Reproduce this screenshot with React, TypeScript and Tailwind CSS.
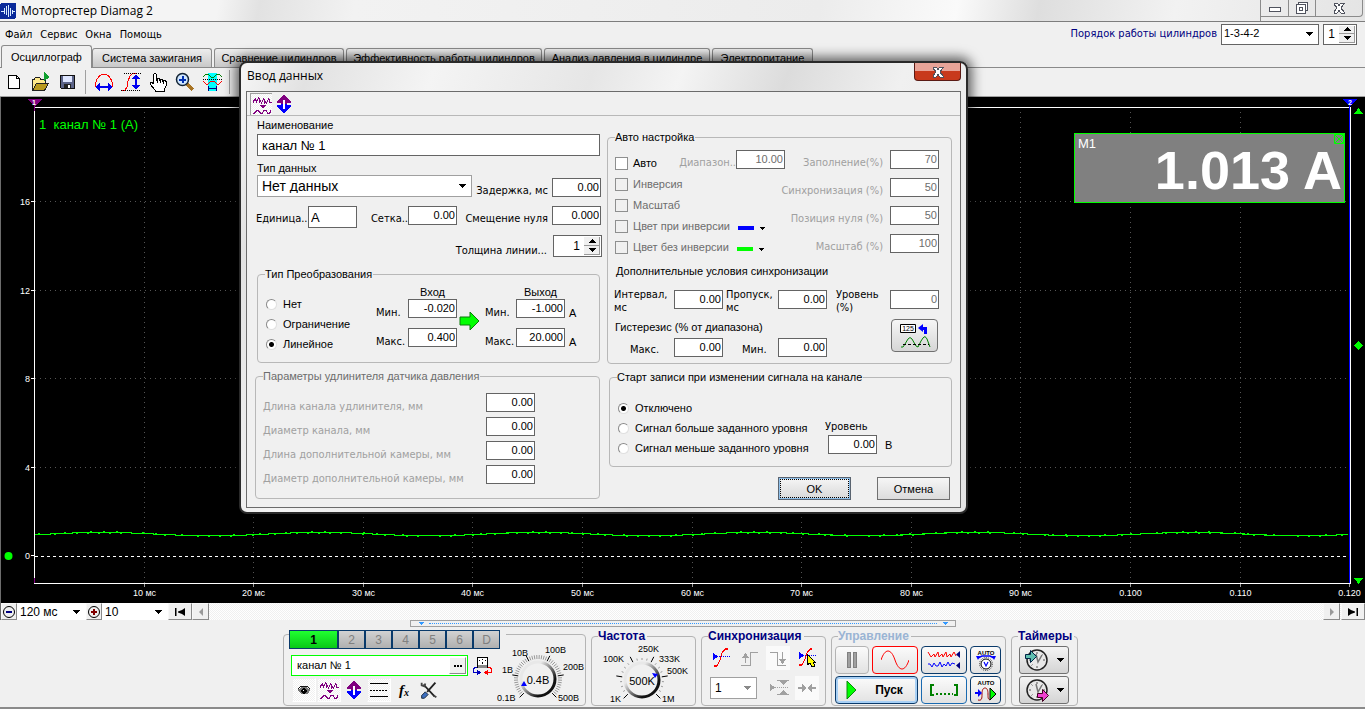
import React, { useState } from 'react';
import clsx from 'clsx';

const sans = "font-['Liberation_Sans',sans-serif]";
const tahoma = "font-['DejaVu_Sans_Condensed','DejaVu_Sans',sans-serif]";
const segoe = "font-['Open_Sans','Noto_Sans',sans-serif]";

const hatch = 'bg-[repeating-conic-gradient(#ffffff_0_25%,#f0f0f0_0_50%)] bg-[length:2px_2px]';

/* ---------- small controls ---------- */

type NumProps = { label: string; value: string; disabled?: boolean; className?: string };

function Num({ label, value, disabled, className }: NumProps) {
  return (
    <input
      aria-label={label}
      defaultValue={value}
      disabled={disabled}
      className={clsx(
        'h-[19px] w-[49px] shrink-0 border border-[#646464] bg-white pr-px pb-px text-right text-[11px] leading-4 disabled:text-[#6d6d6d]',
        className,
      )}
    />
  );
}

function Arrow({ className }: { className?: string }) {
  return (
    <svg viewBox="0 0 8 4" shapeRendering="crispEdges" className={clsx('h-1 w-2 fill-current', className)}>
      <path d="M0 0h8L4 4z" />
    </svg>
  );
}

type DropProps = { label: string; options: string[]; className?: string; box?: string; disabled?: boolean };

function Drop({ label, options, className, box, disabled }: DropProps) {
  return (
    <div className={clsx('relative shrink-0', box)}>
      <select
        aria-label={label}
        disabled={disabled}
        className={clsx('block h-full w-full appearance-none bg-white', className)}
      >
        {options.map((o) => (
          <option key={o}>{o}</option>
        ))}
      </select>
      <Arrow
        className={clsx('pointer-events-none absolute top-1/2 right-1.5 -mt-0.5', disabled && 'text-[#8a8a8a]')}
      />
    </div>
  );
}

function Spinner({ label, className }: { label: string; className?: string }) {
  const [value, setValue] = useState(1);
  const btn = 'flex flex-1 items-center justify-center border-r border-b border-[#9a9a9a] bg-[#f0f0f0]';
  return (
    <div className={clsx('flex shrink-0 border border-[#646464] bg-white p-px', className)}>
      <input
        aria-label={label}
        value={value}
        onChange={(e) => setValue(Number(e.target.value) || 1)}
        className="w-0 flex-1 pr-1 text-right text-[12px]"
      />
      <div className="flex w-4 flex-col">
        <button type="button" aria-label="Больше" onClick={() => setValue(value + 1)} className={btn}>
          <Arrow className="rotate-180" />
        </button>
        <button type="button" aria-label="Меньше" onClick={() => setValue(Math.max(1, value - 1))} className={btn}>
          <Arrow />
        </button>
      </div>
    </div>
  );
}

function Radio({ name, label, checked }: { name: string; label: string; checked?: boolean }) {
  return (
    <label className="flex h-5 items-center gap-[6px] whitespace-nowrap">
      <input
        type="radio"
        name={name}
        defaultChecked={checked}
        className="size-[11px] appearance-none rounded-full border border-[#8a8a8a] border-r-[#e0e0e0] border-b-[#e0e0e0] bg-white checked:bg-[radial-gradient(circle,#000_2px,#fff_3px)]"
      />
      {label}
    </label>
  );
}

function Check({ label, disabled }: { label: string; disabled?: boolean }) {
  return (
    <label className={clsx('flex h-3.5 items-center gap-[5px] whitespace-nowrap', disabled && 'text-[#6d6d6d]')}>
      <input
        type="checkbox"
        disabled={disabled}
        className="size-[13px] appearance-none border border-[#8e8f8f] bg-white checked:bg-[#333] disabled:bg-[#f0f0f0]"
      />
      {label}
    </label>
  );
}

/* ---------- icons ---------- */

type IconProps = { children: React.ReactNode; box?: string; className?: string };

function Icon({ children, box = '0 0 24 24', className = 'size-6' }: IconProps) {
  return (
    <svg viewBox={box} fill="none" shapeRendering="crispEdges" className={clsx('shrink-0', className)}>
      {children}
    </svg>
  );
}

const WavesIcon = () => (
  <Icon>
    <path
      d="M3.500 10V8l2-2 1 3 2-4 1 1v3l1-1 1 2 2-4 1 1v3l1-1 1 1 2-4 1 1v2l2 1"
      stroke="#800080"
      strokeWidth="1.300"
    />
    <path
      d="M3 20.500h1.500l2-3h2l2 3H12l2-3h2l2 3h1.500l1.500-3"
      stroke="#800080"
      strokeWidth="1.300"
    />
    <path d="M9 12h7l-3.500 3.500z" fill="#800080" />
  </Icon>
);

const UpDownIcon = () => (
  <Icon>
    <path d="M12 3l7 6v2h-4v2h-2V8h-2v5H9v-2H5V9z" fill="#800080" />
    <path d="M12 21l7-6v-2h-4v-1h-2v5h-2v-5H9v1H5v2z" fill="#0000ff" />
    <path d="M11 8h2v9h-2z" fill="#fff" />
  </Icon>
);

const AppIcon = () => (
  <Icon box="0 0 16 16" className="size-4">
    <rect width="16" height="16" rx="2" fill="#0a2a9a" />
    <path d="M1 8.500h3M4.500 5v6M6.500 3v9M8.500 2v12M10.500 5v8M12.500 7v4M13 8.500h2" stroke="#d8ecff" />
  </Icon>
);

function MainToolbar() {
  const btn = 'flex w-[27px] items-center justify-center';
  return (
    <div className="flex h-[29px] items-center border-b border-[#a0a0a0] bg-[#f0f0f0]">
      <button type="button" aria-label="Новый" className={btn}>
        <Icon>
          <path d="M6.500 5.500h8l3 3v10h-11z" fill="#fff" stroke="#000" />
          <path d="M14.500 5.500v3h3" stroke="#000" />
        </Icon>
      </button>
      <button type="button" aria-label="Открыть" className={btn}>
        <Icon>
          <path d="M3.500 20v-11h2l1-2h4l1 2h5v5" fill="#ffe98a" stroke="#222" />
          <path d="M3.500 20.500l4-7h12l-4 7z" fill="#b99a1e" stroke="#222" />
          <path d="M15 2l6 5-6 4z" fill="#10a030" />
        </Icon>
      </button>
      <button type="button" aria-label="Сохранить" className={btn}>
        <Icon>
          <path d="M4.500 5.500h14v13h-13l-1-1z" fill="#5c6488" stroke="#111" />
          <path d="M7 6h9v6H7z" fill="#dfe6ff" />
          <path d="M8 14h7v4H8z" fill="#222" />
          <path d="M12 15h2v3h-2z" fill="#fff" />
        </Icon>
      </button>
      <span className="mx-1 h-6 border-l border-[#a0a0a0]" />
      <button type="button" aria-label="По горизонтали" className={btn}>
        <Icon>
          <path d="M3.500 17v-3l1-4 3-4 3-2h3l3 2 3 4 1 4v3" stroke="#f00" />
          <path d="M3 17l5-4v3h8v-3l5 4-5 4v-3H8v3z" fill="#0000f0" />
        </Icon>
      </button>
      <button type="button" aria-label="По вертикали" className={btn}>
        <Icon>
          <path d="M3 20h3l2-3 1-6 2-5 3-3h4" stroke="#f00" />
          <path d="M5 3.500h17M2 20.500h20" stroke="#000" strokeDasharray="1 1" />
          <path d="M17 4l4 5h-3v6h3l-4 5-4-5h3V9h-3z" fill="#0000f0" />
        </Icon>
      </button>
      <button type="button" aria-label="Рука" className={btn}>
        <Icon>
          <path
            d="M7.500 13V4.500l1-1h1l1 1V10h1V8.500h2V10h1V9.500h2V11h1v-.5h1.500l1 1V16l-2 4v1.500h-9V20l-5-6v-1.500h2l1.500 1.500"
            fill="#fff"
            stroke="#000"
          />
          <path d="M11.500 10v3M14.500 10v3M17.500 11v3" stroke="#000" />
        </Icon>
      </button>
      <button type="button" aria-label="Лупа" className={btn}>
        <Icon>
          <path d="M14 14l6 6" stroke="#a87424" strokeWidth="3" />
          <circle cx="9.500" cy="9.500" r="6" fill="#cfe6ff" stroke="#123" strokeWidth="1.500" shapeRendering="auto" />
          <path d="M6 9.500h7M9.500 6v7" stroke="#0030b0" strokeWidth="2" />
        </Icon>
      </button>
      <button type="button" aria-label="Окно измерений" className={btn}>
        <Icon>
          <path d="M8 3h9v18H8z" fill="#00ffff" />
          <path d="M3 7l3-3h2l3 3h3l3-3h2l3 3" stroke="#008000" />
          <path d="M3 11l3 3h2l3-3h3l3 3h2l3-3" stroke="#f00" />
          <path d="M3 9.500h20" stroke="#000" strokeDasharray="1 1" />
          <path d="M8 18.500h9M8.500 16v5M16.500 16v5" stroke="#000080" />
        </Icon>
      </button>
      <span className="mx-1 h-6 border-l border-[#a0a0a0]" />
      <button type="button" aria-label="Сигналы" className={btn}>
        <Icon>
          <path d="M3 9h8" stroke="#008000" />
          <path d="M3 14h8" stroke="#f00" />
        </Icon>
      </button>
    </div>
  );
}

/* ---------- window header ---------- */

const TABS = [
  { title: 'Осциллограф', width: 'w-[91px]' },
  { title: 'Система зажигания', width: 'w-[120px]' },
  { title: 'Сравнение цилиндров', width: 'w-[130px]' },
  { title: 'Эффективность работы цилиндров', width: 'w-[196px]' },
  { title: 'Анализ давления в цилиндре', width: 'w-[166px]' },
  { title: 'Электропитание', width: 'w-[101px]' },
];

function Header() {
  const winBtn = 'flex h-[17px] items-center justify-center border-r border-b border-[#8b8b8b]';
  return (
    <header>
      <div className="flex h-[22px] border-b border-[#7d7d7d] bg-linear-[100deg,#f4f4f4_0%,#f4f4f4_16%,#e2e2e2_19%,#f2f2f2_26%,#ececec_60%,#fafafa_70%,#dedede_76%,#f2f2f2_86%,#e4e4e4_100%]">
        <div className="flex flex-1 items-center gap-[5px]">
          <AppIcon />
          <h1 className={clsx('text-[12px] leading-4', segoe)}>Мотортестер Diamag 2</h1>
        </div>
        <div className="mr-0.5 flex border-l border-[#8b8b8b]">
          <button type="button" aria-label="Свернуть" className={clsx(winBtn, 'w-7')}>
            <Icon box="0 0 12 12" className="size-3">
              <rect x=".5" y="5.500" width="11" height="4" fill="#fff" stroke="#50535e" />
            </Icon>
          </button>
          <button type="button" aria-label="Развернуть" className={clsx(winBtn, 'w-[27px]')}>
            <Icon box="0 0 12 12" className="size-3">
              <rect x="2.500" y=".5" width="9" height="8" fill="#fff" stroke="#50535e" />
              <rect x=".5" y="2.500" width="9" height="9" fill="#fff" stroke="#50535e" />
              <rect x="3.500" y="5.500" width="3" height="3" stroke="#50535e" />
            </Icon>
          </button>
          <button type="button" aria-label="Закрыть" className={clsx(winBtn, 'w-[47px] rounded-br')}>
            <Icon box="0 0 12 12" className="size-3">
              <path d="M1 1h3l2 2.500L8 1h3v1L8 6l3 4v1H8L6 8.500 4 11H1v-1l3-4-3-4z" fill="#fff" stroke="#50535e" />
            </Icon>
          </button>
        </div>
      </div>
      <div className="flex h-6 items-center bg-[#f0f0f0] pr-2">
        <nav className={clsx('flex flex-1 gap-2 pt-[3px] pl-[5px] text-[11px]', tahoma)}>
          {['Файл', 'Сервис', 'Окна', 'Помощь'].map((m) => (
            <button type="button" key={m}>
              {m}
            </button>
          ))}
        </nav>
        <span className={clsx('pr-1 text-[11px] text-[#000080]', tahoma)}>Порядок работы цилиндров</span>
        <Drop
          label="Порядок работы цилиндров"
          options={['1-3-4-2', '1-2-4-3']}
          box="h-[21px] w-[98px]"
          className="border border-[#646464] pb-0.5 pl-0.5 text-[11px]"
        />
        <Spinner label="Номер цилиндра" className="ml-1 h-[21px] w-[34px]" />
      </div>
      <div role="tablist" className="flex h-[22px] items-end gap-0.5 border-b border-[#8a8a8a] bg-[#f0f0f0] pl-px">
        {TABS.map((t, i) => (
          <button
            type="button"
            role="tab"
            aria-selected={i === 0}
            key={t.title}
            className={clsx(
              'rounded-t-[3px] border border-b-0 border-[#8a8a8a] text-[11px] leading-[18px] whitespace-nowrap',
              t.width,
              i === 0 ? '-mr-0.5 -mb-px h-[23px] bg-[#f0f0f0] pb-px' : 'h-[19px] bg-linear-to-b from-[#ededed] to-[#c8c8c8]',
            )}
          >
            {t.title}
          </button>
        ))}
      </div>
      <MainToolbar />
    </header>
  );
}

/* ---------- oscilloscope screen ---------- */

const X_LABELS = ['10 мс', '20 мс', '30 мс', '40 мс', '50 мс', '60 мс', '70 мс', '80 мс', '90 мс', '0.100', '0.110', '0.120'];
const X0 = 35;
const STEP = 109.6;

function tracePath() {
  let d = '';
  for (let x = X0; x < 1349; x += 1) {
    const base = 436.6 - 1.7 * Math.sin(((x - 48) / 218) * 2 * Math.PI);
    const noise = (x * 7919) % 13 === 0 ? -1 : (x * 104729) % 11 === 0 ? 1 : 0;
    d += `${x === X0 ? 'M' : 'L'}${x} ${Math.round(base + noise * 0.6) + 0.5}`;
  }
  return d;
}

function Scope() {
  return (
    <section className="relative min-h-0 flex-1 border-l border-[#6d6d6d] bg-black">
      <svg
        viewBox="1 0 1364 506"
        preserveAspectRatio="none"
        fill="none"
        shapeRendering="crispEdges"
        className={clsx('block h-full w-full', sans)}
      >
        {X_LABELS.map((label, i) => {
          const x = Math.round(X0 + STEP * (i + 1)) - 0.5;
          return (
            <g key={label}>
              {i < 11 && <path d={`M${x} 15V486`} stroke="#555" strokeDasharray="1 4" />}
              <path d={`M${x} 486v4`} stroke="#999" />
              <text x={x} y="499" fill="#fff" fontSize="9" textAnchor="middle">
                {label}
              </text>
            </g>
          );
        })}
        {[16, 12, 8, 4, 0].map((v, i) => {
          const y = Math.round(104 + i * 88.5) + 0.5;
          return (
            <g key={v}>
              {v > 0 && <path d={`M35 ${y}H1349`} stroke="#555" strokeDasharray="1 4" />}
              <path d={`M31 ${y}h4`} stroke="#fff" />
              <text x="30" y={y + 3} fill="#fff" fontSize="9" textAnchor="end">
                {v}
              </text>
            </g>
          );
        })}
        <path d="M35 459.500H1350" stroke="#fff" strokeDasharray="3 3" />
        <path d="M34.500 10.500V486.500H1350.500V10.500z" stroke="#fff" />
        <path d="M1349.500 8V486" stroke="#0000ff" />
        <path d="M34.500 7V14M34.500 481v5" stroke="#800080" />
        <path d={tracePath()} stroke="#00ff00" />
        <path d="M27 2h15l-7 7z" fill="#800080" />
        <path d="M1342 2h15l-7 7z" fill="#0000ff" />
        <text x="34" y="8" fill="#fff" fontSize="7" fontWeight="bold" textAnchor="middle">
          1
        </text>
        <text x="1350" y="8" fill="#fff" fontSize="7" fontWeight="bold" textAnchor="middle">
          2
        </text>
        <circle cx="8.500" cy="459" r="4" fill="#00ff00" shapeRendering="auto" />
        <path d="M1354 17l4.500-6 4.500 6zM1354 481l4.500 6 4.500-6zM1354 248.500l4.500-4.500 4.500 4.500-4.500 4.500z" fill="#00ff00" />
        <text x="39" y="32" fill="#00ff00" fontSize="13" xmlSpace="preserve">
          {'1  канал № 1 (A)'}
        </text>
      </svg>
      <div className="absolute top-9 right-5 flex h-[70px] w-[271px] justify-between border border-[#00ff00] bg-[#808080] text-white">
        <span className="pl-[3px] text-[13px] leading-5">M1</span>
        <span className="pr-0.5 text-[54px] leading-[72px] font-bold">1.013 A</span>
        <svg viewBox="0 0 10 10" fill="none" stroke="#00ff00" className="absolute top-0 right-0 size-2.5">
          <path d="M.5.5h9v9h-9zM1 1l8 8M9 1L1 9" />
        </svg>
      </div>
    </section>
  );
}

function ScrollStrip() {
  const btn =
    'flex h-[17px] shrink-0 items-center justify-center border border-[#f8f8f8] border-r-[#8a8a8a] border-b-[#8a8a8a] bg-[#f0f0f0]';
  return (
    <div className={clsx('flex h-[17px] border-l border-[#6d6d6d]', hatch)}>
      <button type="button" aria-label="Сжать" className={clsx(btn, 'w-4')}>
        <svg viewBox="0 0 14 14" fill="none" className="size-3.5 shrink-0">
          <circle cx="7" cy="7" r="5.500" stroke="#000" />
          <path d="M4 7h6" stroke="#000080" strokeWidth="2" />
        </svg>
      </button>
      <Drop label="Развёртка" options={['120  мс']} box="h-[17px] w-[69px]" className="pl-[3px] text-[12px]" />
      <button type="button" aria-label="Растянуть" className={clsx(btn, 'w-4')}>
        <svg viewBox="0 0 14 14" fill="none" className="size-3.5 shrink-0">
          <circle cx="7" cy="7" r="5.500" stroke="#000" />
          <path d="M4 7h6M7 4v6" stroke="#800000" strokeWidth="2" />
        </svg>
      </button>
      <Drop label="Шаг" options={['10']} box="h-[17px] w-[66px]" className="pl-[3px] text-[12px]" />
      <button type="button" aria-label="В начало" className={clsx(btn, 'w-6')}>
        <svg viewBox="0 0 10 8" className="h-2 w-2.5">
          <path d="M0 0h1.500v8H0zM10 0v8L7 6 3 4.500v-1L7 2z" />
        </svg>
      </button>
      <button type="button" aria-label="Назад" className={clsx(btn, 'w-[17px]')}>
        <svg viewBox="0 0 4 8" className="h-2 w-1 fill-[#999]">
          <path d="M4 0v8L0 4z" />
        </svg>
      </button>
      <div className="flex-1" />
      <button type="button" aria-label="Вперёд" className={clsx(btn, 'w-[17px]')}>
        <svg viewBox="0 0 4 8" className="h-2 w-1 fill-[#999]">
          <path d="M0 0v8l4-4z" />
        </svg>
      </button>
      <button type="button" aria-label="В конец" className={clsx(btn, 'ml-px w-6')}>
        <svg viewBox="0 0 10 8" className="h-2 w-2.5">
          <path d="M8.500 0H10v8H8.500zM0 0v8l3-2 4-1.500v-1L3 2z" />
        </svg>
      </button>
    </div>
  );
}

/* ---------- bottom control deck ---------- */

type DialProps = {
  box: string;
  className: string;
  cx: number;
  value: string;
  labels: [string, number, number][];
  pointer: string;
  count: number;
};

function Dial({ box, className, cx, value, labels, pointer, count }: DialProps) {
  const cy = 680;
  const dense = count > 24;
  return (
    <svg viewBox={box} className={clsx('shrink-0', className, sans)}>
      <defs>
        <linearGradient id={`rim${cx}`} x1="0" y1="0" x2="1" y2="1">
          <stop offset="0.3" stopColor="#e8e8e8" />
          <stop offset="0.75" stopColor="#111" />
        </linearGradient>
      </defs>
      {Array.from({ length: count }, (_, i) => {
        const a = ((135 + (270 * i) / (count - 1)) * Math.PI) / 180;
        const major = i % ((count - 1) / 5) < 0.5;
        const r2 = major ? 26 : dense ? 24 : 22;
        return (
          <line
            key={i}
            x1={cx + 20 * Math.cos(a)}
            y1={cy + 20 * Math.sin(a)}
            x2={cx + r2 * Math.cos(a)}
            y2={cy + r2 * Math.sin(a)}
            stroke={major ? '#000' : '#999'}
          />
        );
      })}
      <circle cx={cx} cy={cy} r="17" fill="#f0f0f0" stroke={`url(#rim${cx})`} strokeWidth="3" />
      <path d={pointer} fill="#0000ff" />
      <text x={cx} y={cy + 5} fontSize="11" textAnchor="middle">
        {value}
      </text>
      {labels.map(([t, x, y]) => (
        <text key={t} x={x} y={y} fontSize="9">
          {t}
        </text>
      ))}
    </svg>
  );
}

type PanelProps = { title: string; muted?: boolean; className?: string; children: React.ReactNode };

function Panel({ title, muted, className, children }: PanelProps) {
  return (
    <fieldset className={clsx('h-[77px] shrink-0 rounded border border-[#b4b4b4]', className)}>
      <legend
        className={clsx('ml-1.5 pr-0.5 text-[12px] leading-[14px] font-bold', muted ? 'text-[#9ab4d4]' : 'text-[#000080]')}
      >
        {title}
      </legend>
      {children}
    </fieldset>
  );
}

function ChannelPanel() {
  const tool = 'flex size-6 items-center justify-center border border-[#f0f0f0]';
  const pressed = clsx('border-[#a0a0a0] border-r-white border-b-white', hatch);
  return (
    <div className="mt-[5px] flex h-[72px] w-[303px] shrink-0 rounded border border-[#b4b4b4]">
      <div className="-mt-[5px] w-[213px] shrink-0 pl-[5px]">
        <div className="flex w-[217px] bg-[#f0f0f0]">
          <button
            type="button"
            className="h-[19px] w-[49px] border border-[#0a3a6a] bg-linear-to-b from-[#20ff30] to-[#08c818] text-[12px] font-bold"
          >
            1
          </button>
          {['2', '3', '4', '5', '6', 'D'].map((c) => (
            <button
              type="button"
              key={c}
              className="h-[19px] w-[27px] border border-[#0a3a6a] bg-linear-to-b from-[#d2d2d2] to-[#b0b0b0] text-[12px] text-[#808080]"
            >
              {c}
            </button>
          ))}
        </div>
        <div className="mt-[6px] flex items-center gap-1 pl-0.5">
          <div className="flex h-[21px] w-[177px] border border-[#00ff00] bg-white p-px">
            <input aria-label="Имя канала" defaultValue="канал № 1" className="w-0 flex-1 pl-1 text-[11px]" />
            <button
              type="button"
              aria-label="Выбрать канал"
              className="flex w-[17px] items-center justify-center gap-px border border-white border-r-[#8a8a8a] border-b-[#8a8a8a] bg-[#f0f0f0]"
            >
              <i className="size-0.5 bg-black" />
              <i className="size-0.5 bg-black" />
              <i className="size-0.5 bg-black" />
            </button>
          </div>
          <button type="button" aria-label="Прибор">
            <Icon box="0 0 20 20" className="size-5">
              <path d="M5.500 1.500h10v10h-10z" fill="#fff" stroke="#000" />
              <path d="M6 9h9v3H6z" fill="#888" />
              <path d="M7 4.500h1M10 3.500h1M13 4.500h1M10 8l1-2" stroke="#000" />
              <path d="M5 11.500H3L1.500 13v3l1 .5H6" stroke="#0000c0" />
              <path d="M5 13.500l4 3-4 3z" fill="#0000c0" />
              <path d="M16 11.500h2l1.500 1.500v3l-1 .5H15" stroke="#f00" />
              <path d="M16 13.500l-4 3 4 3z" fill="#f00" />
            </Icon>
          </button>
        </div>
        <div className="mt-0.5 flex gap-px pl-[3px]">
          <button type="button" aria-label="Видимость" className={clsx(tool, pressed)}>
            <Icon className="size-[22px]">
              <path d="M5 12l4-3h6l4 3-3 4H9z" fill="#777" />
              <path d="M5 11l4-3h6l4 3" stroke="#000" />
              <circle cx="12" cy="13" r="3" fill="#000" />
              <path d="M11 12h1v1h-1z" fill="#fff" />
            </Icon>
          </button>
          <button type="button" aria-label="Фильтр" className={clsx(tool, pressed)}>
            <WavesIcon />
          </button>
          <button type="button" aria-label="Смещение" className={tool}>
            <UpDownIcon />
          </button>
          <button type="button" aria-label="Линии" className={clsx(tool, pressed)}>
            <svg viewBox="0 0 18 14" fill="none" stroke="#000" className="h-3.5 w-[18px] shrink-0">
              <path d="M0 .5h18M0 13.500h18" />
              <path d="M0 7.500h18" strokeDasharray="2 1" />
            </svg>
          </button>
          <button type="button" aria-label="Функция" className={clsx(tool, "font-['Liberation_Serif',serif]")}>
            <span className="text-[15px] leading-5 font-bold italic">f</span>
            <span className="pt-1 text-[10px] font-bold italic">x</span>
          </button>
          <button type="button" aria-label="Настройки" className={tool}>
            <svg viewBox="0 0 24 24" fill="none" className="size-[22px] shrink-0">
              <path d="M6 6l12 13M19 4l-9 10" stroke="#222" strokeWidth="2" />
              <path d="M4 4v3l3 1 1-3M17 18l3 2" stroke="#444" strokeWidth="2" />
              <path d="M4 18l4-4 3 3-4 4H4z" fill="#3c6ebf" stroke="#123" />
            </svg>
          </button>
        </div>
      </div>
      <Dial
        box="497 636 88 70"
        className="h-[70px] w-[88px]"
        cx={538}
        count={46}
        value="0.4B"
        pointer="M521 687l3-5 3 5z"
        labels={[
          ['0.1B', 497, 702],
          ['1B', 502, 674],
          ['10B', 512, 657],
          ['100B', 545, 654],
          ['200B', 563, 671],
          ['500B', 558, 702],
        ]}
      />
    </div>
  );
}

function SyncPanel() {
  const tool = 'flex size-6 items-center justify-center';
  return (
    <Panel title="Синхронизация" className="w-[125px]">
      <div className="mt-[3px] flex justify-between pr-1.5 pl-[7px]">
        <button type="button" aria-label="Синхронизация по уровню" className={tool}>
          <Icon>
            <path d="M5 20h3l3-6 2-7 3-4h3" stroke="#f00" strokeWidth="1.200" />
            <path d="M4 10.500h17" stroke="#00f" strokeDasharray="1 1" />
            <path d="M4 7l5 3.500L4 14z" fill="#00f" />
          </Icon>
        </button>
        <button type="button" aria-label="По фронту" disabled className={tool}>
          <Icon>
            <path d="M3 19.500h9.500v-13H20M7.500 17V9" stroke="#a0a0a0" strokeWidth="1.300" />
            <path d="M4 12l3.500-5 3.500 5z" fill="#a0a0a0" />
          </Icon>
        </button>
        <button type="button" aria-label="По спаду" disabled className={clsx(tool, 'bg-[#fafafa]')}>
          <Icon>
            <path d="M4 6.500h7.500v13H20M16.500 6v9" stroke="#a0a0a0" strokeWidth="1.300" />
            <path d="M13 13l3.500 5 3.500-5z" fill="#a0a0a0" />
          </Icon>
        </button>
        <button type="button" aria-label="Указать уровень" className={tool}>
          <Icon>
            <path d="M4 19h3l3-6 2-6 3-4h2" stroke="#f00" strokeWidth="1.200" />
            <path d="M4 9.500h17" stroke="#00f" strokeDasharray="1 1" />
            <path d="M4 6l5 3.500L4 13z" fill="#00f" />
            <path d="M12 8l8 8h-2l2 4-3 1-2-4-3 2z" fill="#ff0" stroke="#000" />
          </Icon>
        </button>
      </div>
      <div className="mt-1.5 flex items-center pl-2">
        <Drop
          label="Канал синхронизации"
          options={['1']}
          disabled
          box="h-[22px] w-[47px]"
          className="border border-[#a0a0a0] bg-[#f0f0f0] pl-1 text-[12px]"
        />
        <button type="button" aria-label="Уровни" disabled className={clsx(tool, 'ml-2.5')}>
          <Icon>
            <path d="M10 4.500h12M10 18.500h12" stroke="#a0a0a0" />
            <path d="M6 11.500h15" stroke="#a0a0a0" strokeDasharray="1 1" />
            <path d="M3 8l5 3.500L3 15zM13 5h7l-3.500 4zM13 18h7l-3.500-4z" fill="#a0a0a0" />
          </Icon>
        </button>
        <button type="button" aria-label="К центру" disabled className={clsx(tool, 'ml-1 bg-[#fafafa]')}>
          <Icon>
            <path d="M3 11h4V8l5 4-5 4v-3H3zM21 11h-4V8l-5 4 5 4v-3h4z" fill="#a0a0a0" />
          </Icon>
        </button>
      </div>
    </Panel>
  );
}

function ControlPanel() {
  const btn = 'flex h-7 items-center justify-center rounded-sm border bg-linear-to-b from-[#fbfbfb] to-[#e2e2e2]';
  const navy = 'border-[#0a3a6a]';
  return (
    <Panel title="Управление" muted className="w-[175px]">
      <div className="grid grid-cols-[34px_46px_46px_31px] gap-x-[3px] gap-y-0.5 pt-[3px] pl-[3px]">
        <button type="button" aria-label="Пауза" disabled className={clsx(btn, 'border-[#b4b4b4]')}>
          <Icon box="0 0 12 16" className="h-4 w-3">
            <path d="M1.500.5h3v15h-3zM7.500.5h3v15h-3z" fill="#a0a0a0" stroke="#808080" />
          </Icon>
        </button>
        <button type="button" aria-label="Синус" className={clsx(btn, 'border-[#f00]')}>
          <svg viewBox="0 0 28 20" fill="none" stroke="#f00" className="h-5 w-7">
            <path d="M0 10C4-2 10-2 14 10s10 12 14 0" />
          </svg>
        </button>
        <button type="button" aria-label="Поток" className={clsx(btn, navy)}>
          <svg viewBox="0 0 34 20" fill="none" className="h-5 w-[34px]">
            <path d="M1 2l3 5 3-3 1 3 3-5 1 5 3-3 1 3 3-5 1 5 3-3 1 3 3-5 2 4" stroke="#f00" />
            <path d="M1 14h2l2 3 2-4 2 3 2 0 2-4 2 5 2-3 2 2 2-4 2 4 2-3 3 1" stroke="#00f" />
            <path d="M33 1v7l-4-3.500zM33 12v7l-4-3.500z" fill="#000080" />
          </svg>
        </button>
        <button type="button" aria-label="Авто уровень" className={clsx(btn, navy)}>
          <AutoIcon knob />
        </button>
        <button
          type="button"
          className={clsx(btn, navy, 'col-span-2 pr-1 text-[12px] font-bold shadow-[inset_0_0_0_2px_#a8d0f5]')}
        >
          <svg viewBox="0 0 11 20" className="mr-[18px] h-5 w-[11px]">
            <path d="M1 1l9 9-9 9z" fill="#0f0" stroke="#0a8a0a" />
          </svg>
          Пуск
        </button>
        <button type="button" aria-label="Участок" className={clsx(btn, 'border-[#1a6ab0]')}>
          <svg viewBox="0 0 28 12" fill="none" stroke="#008000" strokeWidth="2" className="h-3 w-7">
            <path d="M4 1H1v10h3M24 1h3v10h-3" />
            <path d="M6 10h17" strokeDasharray="2 2" />
          </svg>
        </button>
        <button type="button" aria-label="Авто запуск" className={clsx(btn, navy)}>
          <AutoIcon />
        </button>
      </div>
    </Panel>
  );
}

function AutoIcon({ knob }: { knob?: boolean }) {
  return (
    <svg viewBox="0 0 22 24" fill="none" className={clsx('h-6 w-[22px]', sans)}>
      <text x="11" y="7" fontSize="6" fontWeight="bold" textAnchor="middle" fill="#000">
        AUTO
      </text>
      {knob ? (
        <>
          <path d="M3 10l4-2h8l4 2" stroke="#00f" strokeWidth="1.500" />
          <path d="M1 8l4 0-2 4zM21 8l-4 0 2 4z" fill="#00f" />
          <circle cx="11" cy="16" r="6.500" stroke="#444" strokeDasharray="1 1" />
          <circle cx="11" cy="16" r="5" fill="#fff" stroke="#000" />
          <path d="M9 14l2 4 2-4" stroke="#00f" strokeWidth="1.200" />
        </>
      ) : (
        <>
          <path d="M3 22c4 1 4-2 4-6s1-6 3-6 3 2 3 6 0 5 2 6" stroke="#a00000" />
          <path d="M0 14h3v-3l4 4-4 4v-3H0z" fill="#00f" />
          <path d="M15 10l6 6-6 6z" fill="#0f0" stroke="#000" />
        </>
      )}
    </svg>
  );
}

function TimerPanel() {
  const btn =
    'flex h-7 w-[50px] items-center gap-1.5 rounded-[3px] border border-[#707070] bg-linear-to-b from-[#f4f4f4] to-[#d4d4d4] pl-1';
  return (
    <Panel title="Таймеры" className="w-[67px]">
      <div className="flex flex-col gap-0.5 pt-[3px] pl-[7px]">
        {['Таймер запуска', 'Таймер остановки'].map((t, i) => (
          <button type="button" aria-label={t} key={t} className={btn}>
            <svg viewBox="0 0 26 24" fill="none" className="h-6 w-[26px]">
              <circle cx="13" cy="12" r="10" fill="#e8e8e8" stroke="#222" strokeWidth="1.500" />
              <path d="M13 4v2M13 18v2M5 12h2M19 12h2M7.500 6.500l1 1M18.500 6.500l-1 1M7.500 17.500l1-1" stroke="#555" />
              <path d="M12 6l2 8 4-7" stroke="#777" strokeWidth="1.500" />
              {i === 0 ? (
                <path d="M1.500 6.500h5v-4l6 6-6 6v-4h-5z" fill="#5fc0b0" stroke="#024" />
              ) : (
                <path d="M13.500 15.500h5v-4l6 6-6 6v-4h-5z" fill="#f040d0" stroke="#402" />
              )}
            </svg>
            <Arrow />
          </button>
        ))}
      </div>
    </Panel>
  );
}

function Deck() {
  return (
    <footer className="border-b-2 border-[#8a8a8a] bg-[#f0f0f0] pb-px">
      <div className="flex justify-center">
        <div className="flex h-[7px] w-[546px] items-center gap-1 border border-[#a0a0a0] px-1.5 text-[#3399ff]">
          <Arrow className="h-[3px] w-1.5" />
          <span className="flex-1 border-t border-dotted border-[#3399ff]" />
          <Arrow className="h-[3px] w-1.5" />
        </div>
      </div>
      <div className="mt-0.5 flex justify-center gap-[5px] pr-1">
        <ChannelPanel />
        <Panel title="Частота" className="w-[105px]">
          <Dial
            box="594 643 100 61"
            className="mx-auto h-[61px] w-[100px]"
            cx={642}
            count={21}
            value="500K"
            pointer="M652 673l6 1-3 4z"
            labels={[
              ['1K', 610, 702],
              ['100K', 603, 662],
              ['250K', 638, 652],
              ['333K', 659, 662],
              ['500K', 667, 674],
              ['1M', 662, 702],
            ]}
          />
        </Panel>
        <SyncPanel />
        <ControlPanel />
        <TimerPanel />
      </div>
    </footer>
  );
}

/* ---------- data entry dialog ---------- */

const group = 'rounded border border-[#b8b8b8]';
const legend = 'ml-[7px] pr-px leading-[14px]';

function ConversionGroup() {
  return (
    <fieldset className={clsx(group, 'mt-2.5 ml-0.5 h-24 w-[343px]')}>
      <legend className={legend}>Тип Преобразования</legend>
      <div className="flex w-full">
        <div className="w-[118px] pt-[13px] pl-2">
          <Radio name="conv" label="Нет" />
          <Radio name="conv" label="Ограничение" />
          <Radio name="conv" label="Линейное" checked />
        </div>
        <div className="grid grid-cols-[32px_49px] content-start pt-1">
          <span className="col-start-2 text-center leading-[14px]">Вход</span>
          <span className={clsx('-mb-1 pt-[7px]', tahoma)}>Мин.</span>
          <Num label="Вход, мин." value="-0.020" />
          <span className={clsx('pt-[17px]', tahoma)}>Макс.</span>
          <Num label="Вход, макс." value="0.400" className="mt-2.5" />
        </div>
        <svg viewBox="0 0 22 20" className="mr-1 ml-0.5 mt-[30px] h-5 w-[22px]">
          <path d="M1 6h10V1l9 9-9 9v-5H1z" fill="#0f0" stroke="#0a7a0a" />
        </svg>
        <div className="grid grid-cols-[31px_49px_16px] content-start pt-1">
          <span className="col-start-2 text-center leading-[14px]">Выход</span>
          <span className={clsx('col-start-1 -mb-1 pt-[7px]', tahoma)}>Мин.</span>
          <Num label="Выход, мин." value="-1.000" />
          <span className="-mb-1 pt-[7px] pl-1">A</span>
          <span className={clsx('pt-[17px]', tahoma)}>Макс.</span>
          <Num label="Выход, макс." value="20.000" className="mt-2.5" />
          <span className="pt-[17px] pl-1">A</span>
        </div>
      </div>
    </fieldset>
  );
}

const PRESSURE = [
  'Длина канала удлинителя, мм',
  'Диаметр канала, мм',
  'Длина дополнительной камеры, мм',
  'Диаметр дополнительной камеры, мм',
];

function LeftColumn() {
  return (
    <div className="w-[347px]">
      <label htmlFor="name" className="mt-0.5 ml-0.5 block">
        Наименование
      </label>
      <input
        id="name"
        defaultValue="канал № 1"
        className="mt-0.5 ml-0.5 block h-[22px] w-[343px] border border-[#646464] bg-white pl-1 text-[13px]"
      />
      <p className="mt-[5px] ml-0.5">Тип данных</p>
      <div className="ml-0.5 flex items-end">
        <Drop
          label="Тип данных"
          options={['Нет данных', 'Давление', 'Ток']}
          box="h-[22px] w-[215px]"
          className="border border-[#a0a0a0] pl-1 text-[14px]"
        />
        <span className={clsx('flex-1 text-right leading-3', tahoma)}>Задержка, мс</span>
        <Num label="Задержка, мс" value="0.00" className="mr-px ml-1" />
      </div>
      <div className="mt-[9px] flex items-start">
        <span className={clsx('w-[53px] pt-1.5 pl-px', tahoma)}>Единица..</span>
        <input aria-label="Единица" defaultValue="A" className="h-[22px] w-[49px] border border-[#646464] bg-white pl-0.5 text-[13px]" />
        <span className={clsx('w-[51px] pt-1.5 text-right', tahoma)}>Сетка..</span>
        <Num label="Сетка" value="0.00" />
        <span className={clsx('flex-1 pt-1.5 text-right', tahoma)}>Смещение нуля</span>
        <Num label="Смещение нуля" value="0.000" className="mr-px ml-1" />
      </div>
      <div className="mt-[7px] flex h-[22px] items-start justify-end">
        <span className={clsx('pt-[9px] pr-1.5', tahoma)}>Толщина линии...</span>
        <Spinner label="Толщина линии" className="h-[22px] w-[49px]" />
      </div>
      <ConversionGroup />
      <fieldset className={clsx(group, 'mt-1.5 h-[130px] w-[345px]')}>
        <legend className={clsx(legend, 'text-[#6d6d6d]')}>Параметры удлинителя датчика давления</legend>
        <div className="flex flex-col gap-[5px] pt-2.5 pl-[7px]">
          {PRESSURE.map((p) => (
            <div key={p} className="flex h-[19px] items-start">
              <span className={clsx('w-[223px] pt-[7px] whitespace-nowrap text-[#a0a0a0]', tahoma)}>{p}</span>
              <Num label={p} value="0.00" />
            </div>
          ))}
        </div>
      </fieldset>
    </div>
  );
}

function ColorPick({ label, color }: { label: string; color: string }) {
  return (
    <button type="button" aria-label={label} className="ml-2 flex h-4 items-center gap-1 pt-0.5">
      <span className={clsx('h-1 w-4', color)} />
      <Arrow className="h-[3px] w-1.5" />
    </button>
  );
}

function AutoGroup() {
  return (
    <fieldset className={clsx(group, 'h-[234px] w-[345px] min-w-0')}>
      <legend className={clsx(legend, 'ml-1.5')}>Авто настройка</legend>
      <div className="flex justify-between pr-3 pl-[7px]">
        <div className="flex w-[150px] flex-col pt-3">
          <div className="flex h-[21px] items-start">
            <Check label="Авто" />
            <span className={clsx('w-[79px] shrink-0 text-right text-[#a0a0a0]', tahoma)}>Диапазон..</span>
            <Num label="Диапазон" value="10.00" disabled className="-mt-1.5" />
          </div>
          {['Инверсия', 'Масштаб'].map((c) => (
            <div key={c} className="flex h-[21px] items-start">
              <Check label={c} disabled />
            </div>
          ))}
          <div className="flex h-[21px] items-start">
            <Check label="Цвет при инверсии" disabled />
            <ColorPick label="Цвет при инверсии" color="bg-[#0000ff]" />
          </div>
          <div className="flex h-[21px] items-start">
            <Check label="Цвет без инверсии" disabled />
            <ColorPick label="Цвет без инверсии" color="bg-[#00ff00]" />
          </div>
        </div>
        <div className="flex flex-col gap-[9px] pt-1.5">
          {[
            ['Заполнение(%)', '70'],
            ['Синхронизация (%)', '50'],
            ['Позиция нуля (%)', '50'],
            ['Масштаб (%)', '100'],
          ].map(([l, v]) => (
            <div key={l} className="flex h-[19px] items-start justify-end">
              <span className={clsx('pt-1.5 pr-[7px] whitespace-nowrap text-[#a0a0a0]', tahoma)}>{l}</span>
              <Num label={l} value={v} disabled />
            </div>
          ))}
        </div>
      </div>
      <p className="pt-[3px] pl-2">Дополнительные условия синхронизации</p>
      <div className={clsx('grid grid-cols-[60px_52px_52px_58px_54px_49px] pt-2.5 pl-1.5 leading-[13px]', tahoma)}>
        <span className="w-14">Интервал, мс</span>
        <Num label="Интервал, мс" value="0.00" className={clsx('mt-0.5', sans)} />
        <span>Пропуск, мс</span>
        <Num label="Пропуск, мс" value="0.00" className={clsx('mt-0.5', sans)} />
        <span className="w-12">Уровень (%)</span>
        <Num label="Уровень (%)" value="0" disabled className={clsx('mt-0.5', sans)} />
      </div>
      <div className="flex items-start justify-between pt-1 pr-[13px] pl-1.5">
        <div>
          <p className="pt-0.5 pl-px">Гистерезис (% от диапазона)</p>
          <div className="grid grid-cols-[60px_49px_55px_49px] pt-1">
            <span className={clsx('pt-[5px] pl-4', tahoma)}>Макс.</span>
            <Num label="Гистерезис, макс." value="0.00" />
            <span className={clsx('pt-[5px] pl-[19px]', tahoma)}>Мин.</span>
            <Num label="Гистерезис, мин." value="0.00" />
          </div>
        </div>
        <button
          type="button"
          aria-label="Рассчитать"
          className="mt-px flex h-[33px] w-[47px] items-center justify-center rounded-sm border border-[#707070] bg-linear-to-b from-[#f6f6f6] to-[#d6d6d6]"
        >
          <svg viewBox="0 0 32 28" fill="none" className={clsx('h-7 w-8', sans)}>
            <path d="M1.500 2.500h15v8h-15z" fill="#fff" stroke="#000" />
            <text x="9" y="9" fontSize="7" textAnchor="middle" fill="#000">
              125
            </text>
            <path d="M19 6l5-4v3h4v7h-3V8h-1v2z" fill="#00f" />
            <path d="M2 25h2l2-3 3-5q2-3 4 0l4 7 2 1 3-6 2-3q2-3 4 1l3 8" stroke="#008000" />
            <path d="M4 22.500h26" stroke="#000" strokeDasharray="3 2" />
          </svg>
        </button>
      </div>
    </fieldset>
  );
}

function RightColumn() {
  return (
    <div className="mt-3.5 ml-[5px] w-[345px]">
      <AutoGroup />
      <fieldset className={clsx(group, 'mt-1.5 ml-0.5 h-[97px] w-[343px]')}>
        <legend className={legend}>Старт записи при изменении сигнала на канале</legend>
        <div className="flex pt-3.5 pl-2">
          <div className="w-[210px]">
            <Radio name="start" label="Отключено" checked />
            <Radio name="start" label="Сигнал больше заданного уровня" />
            <Radio name="start" label="Сигнал меньше заданного уровня" />
          </div>
          <div className="pt-[21px]">
            <label htmlFor="level" className={clsx('-ml-[3px] block leading-[15px]', tahoma)}>
              Уровень
            </label>
            <div className="flex items-center gap-2 pt-px">
              <input
                id="level"
                defaultValue="0.00"
                className="h-[19px] w-[49px] border border-[#646464] bg-white pr-px pb-px text-right text-[11px]"
              />
              B
            </div>
          </div>
        </div>
      </fieldset>
      <div className="mt-2.5 flex justify-end gap-[26px] pr-0.5">
        <button
          type="button"
          className="h-[23px] w-[73px] border border-[#5a6470] bg-linear-to-b from-[#f6f6f6] to-[#d8d8d8] text-[11px] shadow-[inset_0_0_0_1px_#8fc0ea] outline-1 -outline-offset-3 outline-dotted outline-black"
        >
          OK
        </button>
        <button
          type="button"
          className="h-[23px] w-[73px] border border-[#707070] bg-linear-to-b from-[#f6f6f6] to-[#dcdcdc] text-[11px]"
        >
          Отмена
        </button>
      </div>
    </div>
  );
}

function DataDialog() {
  return (
    <div
      role="dialog"
      aria-label="Ввод данных"
      className="absolute top-[61px] left-[239px] w-[729px] rounded-lg border-2 border-[#2a2a2a] bg-linear-[110deg,#f6f6f6_0%,#e2e2e2_8%,#f4f4f4_22%,#e6e6e6_40%,#f4f4f4_50%,#dcdcdc_62%,#f0f0f0_75%,#e4e4e4_100%] px-[5px] pb-1 shadow-[0_0_12px_4px_rgba(0,0,0,0.6)]"
    >
      <div className="flex h-7 items-start">
        <h2 className={clsx('flex-1 pt-[5px] pl-px text-[12px] leading-4', segoe)}>Ввод данных</h2>
        <button
          type="button"
          aria-label="Закрыть окно"
          className="flex h-[18px] w-[47px] items-center justify-center rounded-b border border-t-0 border-[#5a1a14] bg-linear-to-b from-[#e8a498] from-45% to-[#c8391c] to-50%"
        >
          <Icon box="0 0 12 12" className="size-3">
            <path d="M1 1h3l2 2.500L8 1h3v1L8 6l3 4v1H8L6 8.500 4 11H1v-1l3-4-3-4z" fill="#fff" stroke="#50535e" />
          </Icon>
        </button>
      </div>
      <div className="h-[417px] border border-[#6b6b6b] bg-[#f0f0f0] text-[11px] leading-[14px]">
        <div className="flex h-6 items-end border-b border-[#b8b8b8] pl-[3px]">
          <button
            type="button"
            aria-label="Фильтр"
            className={clsx('flex size-[22px] items-center justify-center border-t border-l border-[#a0a0a0]', hatch)}
          >
            <WavesIcon />
          </button>
          <button type="button" aria-label="Смещение" className="flex h-[22px] w-[23px] items-center justify-center">
            <UpDownIcon />
          </button>
        </div>
        <div className="flex pl-2">
          <LeftColumn />
          <RightColumn />
        </div>
      </div>
    </div>
  );
}

export default function App() {
  return (
    <main className={clsx('relative flex h-screen min-h-[480px] flex-col overflow-hidden bg-[#f0f0f0] text-black', sans)}>
      <Header />
      <Scope />
      <ScrollStrip />
      <Deck />
      <DataDialog />
    </main>
  );
}
